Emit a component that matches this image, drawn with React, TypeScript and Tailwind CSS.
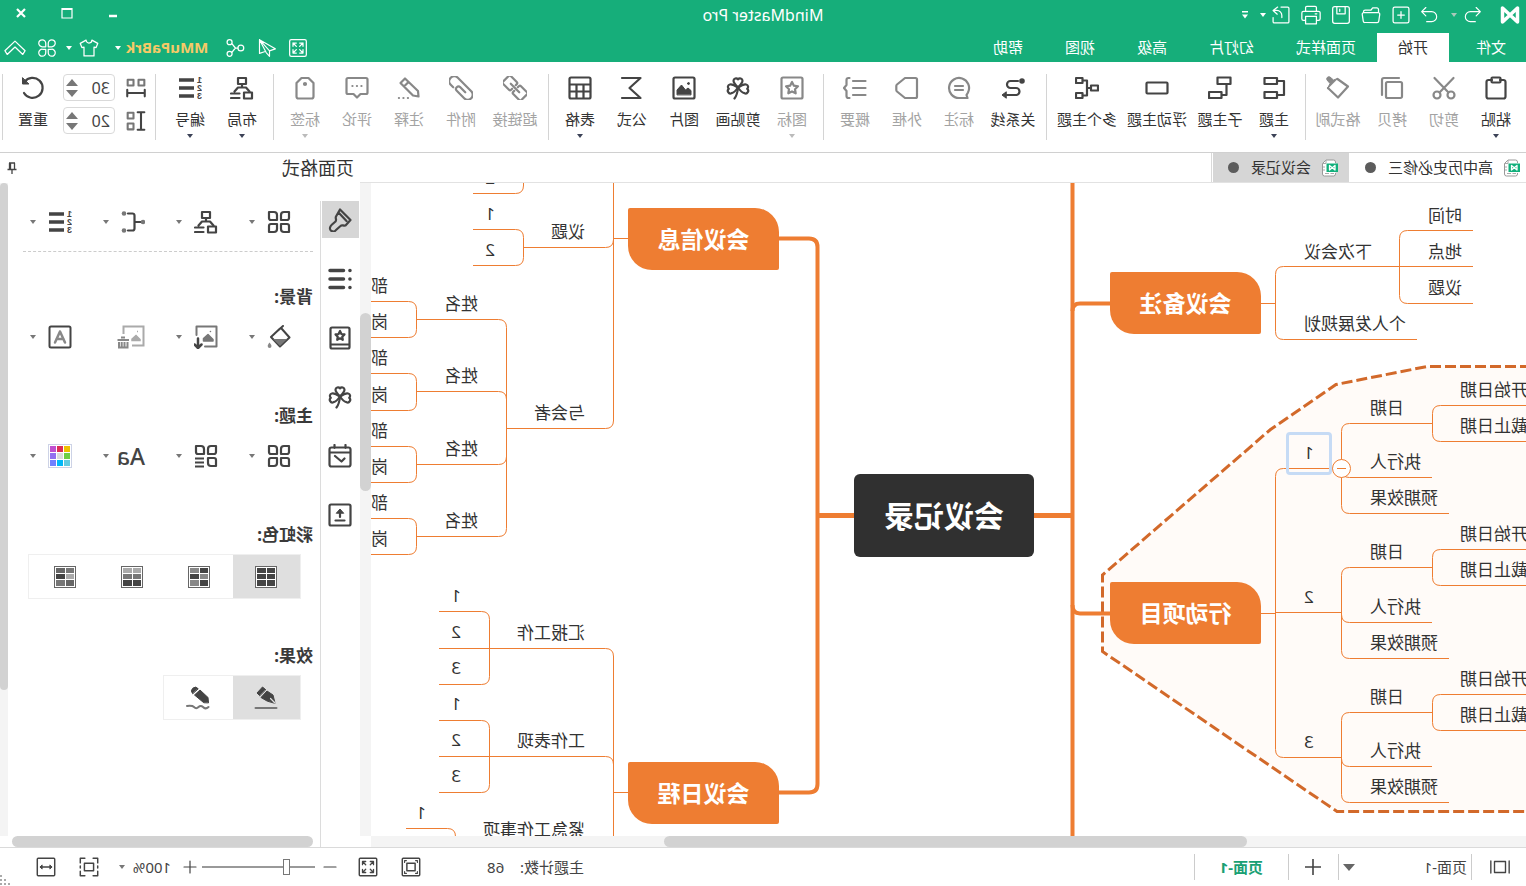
import type { ReactNode } from "react";

type IconProps = { children: ReactNode; size?: string; weight?: number; box?: number };

function Icon({ children, size = "size-6", weight = 2, box = 24 }: IconProps) {
  return (
    <svg
      className={`${size} shrink-0`}
      viewBox={`0 0 ${box} ${box}`}
      fill="none"
      stroke="currentColor"
      strokeWidth={weight}
      strokeLinecap="round"
      strokeLinejoin="round"
      aria-hidden="true"
    >
      {children}
    </svg>
  );
}

function Caret({ className = "text-[#777]" }: { className?: string }) {
  return (
    <svg className={`h-1 w-2 shrink-0 ${className}`} viewBox="0 0 8 4" fill="currentColor" aria-hidden="true">
      <path d="M1 0h6L4 4z" />
    </svg>
  );
}

const cloverShape = (
  <>
    <path d="M12 11.5C9 8.500 7.500 7 7.500 4.800A2.500 2.500 0 0 1 12 3.300a2.500 2.500 0 0 1 4.500 1.500C16.500 7 15 8.500 12 11.500z" />
    <path d="M12 11.500C9 9.500 6.500 7.700 3.800 8.500a2.500 2.500 0 0 0-1 4.300 2.600 2.600 0 0 0 2.700 4.400C8.200 16.700 10 14.500 12 11.500z" />
    <path d="M12 11.500c3-2 5.500-3.800 8.200-3a2.500 2.500 0 0 1 1 4.300 2.600 2.600 0 0 1-2.700 4.400C15.800 16.700 14 14.500 12 11.500z" />
    <path d="M12 12c.5 4.500 1.500 8 3.500 10.500" />
  </>
);

const layoutShape = (
  <>
    <path d="M8 2h8v6H8zM2 16.500h8v6H2z" />
    <path d="M12 8v3.500M4.500 15.500 8 11.500h8l3.500 4M14.500 17.500H23M14.500 22H23" />
  </>
);

const numberingShape = (
  <>
    <g fill="currentColor" stroke="none" fontSize="9" fontWeight="700" fontFamily="Liberation Sans, sans-serif">
      <text x="0" y="7">1</text>
      <text x="0" y="15">2</text>
      <text x="0" y="23">3</text>
    </g>
    <path d="M8 4h15M8 12h15M8 20h15" strokeWidth="3.500" strokeLinecap="butt" />
  </>
);

const themeGridShape = (
  <>
    <path d="M2 2h5a3 3 0 0 1 3 3v5H4a2 2 0 0 1-2-2z" />
    <path d="M22 2h-5a3 3 0 0 0-3 3v5h6a2 2 0 0 0 2-2z" />
    <path d="M2 22h5a3 3 0 0 0 3-3v-5H4a2 2 0 0 0-2 2z" />
  </>
);

const icons = {
  paste: (
    <>
      <path d="M8 4H4.500a2 2 0 0 0-2 2v14.500a2 2 0 0 0 2 2h15a2 2 0 0 0 2-2V6a2 2 0 0 0-2-2H16" />
      <rect x="7.500" y="1.500" width="9" height="5" rx="1" />
    </>
  ),
  cut: (
    <>
      <circle cx="5" cy="19" r="3.500" />
      <circle cx="19" cy="19" r="3.500" />
      <path d="M21.500 2 7.500 16.500M2.500 2l14 14.500" />
    </>
  ),
  copy: (
    <>
      <rect x="2" y="6" width="16" height="16" rx="1.500" />
      <path d="M5 2h15a2 2 0 0 1 2 2v15" />
    </>
  ),
  painter: (
    <>
      <path d="M12.500 3 2 10.500 12 21.500 22 12" />
      <path d="M12.500 2.500l4 1.500 3.500-3a2.200 2.200 0 0 1 3 3l-3 3.500 2.500 5z" fill="currentColor" strokeWidth="1" />
    </>
  ),
  topic: <path d="M9 2h12.500v6H9zM9 16h12.500v6H9zM9 5H2v14h7" />,
  subtopic: <path d="M1.500 1.500h13V8h-13zM10.500 16h12.500v6H10.500zM5.500 8v11h5" />,
  floating: <rect x="1.500" y="6.500" width="21" height="11" rx="1" />,
  multi: <path d="M1 9.500h7v5H1zM16.500 2h6.500v5h-6.500zM16.500 17h6.500v5h-6.500zM8 12h4M16.500 4.500H12v15h4.500" />,
  relation: (
    <>
      <circle cx="3" cy="5" r="1.700" fill="currentColor" />
      <path d="M7 5h7.500a3.500 3.500 0 0 1 0 7H9a3.500 3.500 0 0 0 0 7h9" />
      <path d="M19 16l4 3-4 3z" fill="currentColor" strokeWidth="1" />
    </>
  ),
  callout: <path d="M3.500 22H12A10 10 0 1 0 3 16.500L4.500 19zM8 10h8M8 14h8" />,
  boundary: <path d="M3.500 2H14L22 8.500a2 2 0 0 1 .700 1.500v4a2 2 0 0 1-.700 1.500L14 22H3.500A1.500 1.500 0 0 1 2 20.500v-17A1.500 1.500 0 0 1 3.500 2z" />,
  summary: <path d="M1.500 5H14M1.500 12H14M1.500 19H14M17.500 2h1a2 2 0 0 1 2 2v5l2.500 3-2.500 3v5a2 2 0 0 1-2 2h-1" />,
  mark: (
    <>
      <rect x="1.500" y="1.500" width="21" height="21" rx="1.500" />
      <path d="m12 6 1.900 3.700 4.100.600-3 2.900.700 4.100-3.700-1.900-3.700 1.900.700-4.100-3-2.900 4.100-.600z" />
    </>
  ),
  clover: cloverShape,
  picture: (
    <>
      <rect x="1.500" y="1.500" width="21" height="21" rx="1.500" />
      <circle cx="7.500" cy="7.500" r="1" fill="currentColor" strokeWidth="1" />
      <path d="M5 18.500v-4l3-2.500 2.500 2L14.500 9l4.500 5v4.500z" fill="currentColor" strokeWidth="1" />
    </>
  ),
  formula: <path d="M22 2H3.500l11 10L3.500 22H22" />,
  table: (
    <>
      <rect x="1.500" y="1.500" width="21" height="21" rx="1.500" />
      <path d="M2 8.500h20M2 15.500h20M8.500 9v13M15.500 9v13" />
    </>
  ),
  link: (
    <g transform="rotate(-45 12 12)">
      <path d="M10.500 9.500V8A1.500 1.500 0 0 0 9 6.500H.500A1.500 1.500 0 0 0-1 8v8a1.500 1.500 0 0 0 1.500 1.500H9a1.500 1.500 0 0 0 1.500-1.500v-1.500" />
      <path d="M13.500 9.500V8A1.500 1.500 0 0 1 15 6.500h8.500A1.500 1.500 0 0 1 25 8v8a1.500 1.500 0 0 1-1.500 1.500H15a1.500 1.500 0 0 1-1.500-1.500v-1.500" />
      <path d="M6 12h12" />
    </g>
  ),
  clip: (
    <g transform="rotate(-45 12 12)">
      <path d="M18 17h3.500a5 5 0 0 0 0-10H2.500a5 5 0 0 0 0 10H13a2.500 2.500 0 0 0 0-5H6" />
    </g>
  ),
  note: (
    <>
      <path d="M16 2.500 20.500 7 8 19.500l-5.500 1 .500-5.500zM12.500 6l4.500 4.500" />
      <path d="M13 22h.100M17.500 22h.100M22 22h.100" />
    </>
  ),
  comment: (
    <>
      <path d="M3 2h18a1.500 1.500 0 0 1 1.500 1.500v13A1.500 1.500 0 0 1 21 18h-5.500L12 21.500 8.500 18H3a1.500 1.500 0 0 1-1.500-1.500v-13A1.500 1.500 0 0 1 3 2z" />
      <path d="M7.500 10h.100M12 10h.100M16.500 10h.100" />
    </>
  ),
  tag: (
    <>
      <path d="M8.500 2h7l5 5v13.500a2 2 0 0 1-2 2h-13a2 2 0 0 1-2-2V7z" />
      <circle cx="12" cy="8" r="1" fill="currentColor" />
    </>
  ),
  layout: layoutShape,
  numbering: numberingShape,
  reset: (
    <>
      <path d="M20.500 6A10 10 0 1 0 21 17" />
      <path d="M22.500 2v6h-6z" fill="currentColor" strokeWidth="1" />
    </>
  ),
};

type Tool = { label: string; icon: keyof typeof icons; off?: boolean; menu?: boolean };

const groups: Tool[][] = [
  [
    { label: "粘贴", icon: "paste", menu: true },
    { label: "剪切", icon: "cut", off: true },
    { label: "拷贝", icon: "copy", off: true },
    { label: "格式刷", icon: "painter", off: true },
  ],
  [
    { label: "主题", icon: "topic", menu: true },
    { label: "子主题", icon: "subtopic" },
    { label: "浮动主题", icon: "floating" },
    { label: "多个主题", icon: "multi" },
  ],
  [
    { label: "关系线", icon: "relation" },
    { label: "标注", icon: "callout", off: true },
    { label: "外框", icon: "boundary", off: true },
    { label: "概要", icon: "summary", off: true },
  ],
  [
    { label: "图标", icon: "mark", off: true, menu: true },
    { label: "剪贴画", icon: "clover" },
    { label: "图片", icon: "picture" },
    { label: "公式", icon: "formula" },
    { label: "表格", icon: "table", menu: true },
  ],
  [
    { label: "超链接", icon: "link", off: true },
    { label: "附件", icon: "clip", off: true },
    { label: "注释", icon: "note", off: true },
    { label: "评论", icon: "comment", off: true },
    { label: "标签", icon: "tag", off: true, menu: true },
  ],
  [
    { label: "布局", icon: "layout", menu: true },
    { label: "编号", icon: "numbering", menu: true },
  ],
];

const toolWidths: Record<number, string> = { 2: "w-[52px]", 3: "w-14", 4: "w-[70px]" };

function ToolButton({ tool }: { tool: Tool }) {
  return (
    <button type="button" className={`flex shrink-0 flex-col items-center ${toolWidths[tool.label.length]}`}>
      <span className={tool.off ? "text-[#888]" : "text-[#444]"}>
        <Icon weight={2.2}>{icons[tool.icon]}</Icon>
      </span>
      <span className={`mt-[7px] text-[15px] leading-6 whitespace-nowrap ${tool.off ? "text-[#a3a3a3]" : "text-[#333]"}`}>
        {tool.label}
      </span>
      {tool.menu && <Caret className={tool.off ? "mt-[3px] text-[#bbb]" : "mt-[3px] text-[#3c4257]"} />}
    </button>
  );
}

function Spinner({ label, value, children }: { label: string; value: string; children: ReactNode }) {
  return (
    <div className="flex items-center gap-[11px]">
      <span className="text-[#444]">
        <Icon size="size-5" weight={2}>{children}</Icon>
      </span>
      <div className="flex h-[27px] w-[52px] items-center rounded border border-[#d9d9d9]">
        <input
          type="text"
          aria-label={label}
          defaultValue={value}
          className="w-9 min-w-0 pl-1 text-[16px] leading-6 text-[#444] outline-none"
        />
        <span className="flex flex-col gap-1 text-[#777]">
          <button type="button" aria-label={`${label}增加`}>
            <svg className="h-[7px] w-3" viewBox="0 0 12 7" fill="currentColor"><path d="M6 0l6 7H0z" /></svg>
          </button>
          <button type="button" aria-label={`${label}减少`}>
            <svg className="h-[7px] w-3" viewBox="0 0 12 7" fill="currentColor"><path d="M0 0h12L6 7z" /></svg>
          </button>
        </span>
      </div>
    </div>
  );
}

function IconButton({ label, children, className = "" }: { label: string; children: ReactNode; className?: string }) {
  return (
    <button type="button" aria-label={label} className={`flex shrink-0 items-center justify-center ${className}`}>
      {children}
    </button>
  );
}

function Header() {
  return (
    <header className="bg-[#16ae7a] text-white">
      <div className="grid h-[33px] grid-cols-[1fr_auto_1fr] items-center pb-[3px]">
        <div className="flex items-center pl-1.5">
          <Icon size="size-5" weight={3.5} box={20}>
            <path d="M2.500 3v14L17.500 3v14z" />
          </Icon>
          <IconButton label="撤销" className="ml-[18px]">
            <Icon size="size-5" weight={1.4}><path d="M7 3 2 8l5 5M2 8h12a6 6 0 0 1 0 12H8" /></Icon>
          </IconButton>
          <IconButton label="撤销列表" className="ml-1"><Caret className="text-[#a9c9ba]" /></IconButton>
          <IconButton label="恢复" className="ml-2.5">
            <Icon size="size-5" weight={1.4}><path d="m17 3 5 5-5 5M22 8H10a6 6 0 0 0 0 12h6" /></Icon>
          </IconButton>
          <div className="ml-[9px] flex gap-2.5">
            <IconButton label="新建">
              <Icon size="size-5" weight={1.5}><rect x="2.500" y="2.500" width="19" height="19" rx="2" /><path d="M12 8v8M8 12h8" /></Icon>
            </IconButton>
            <IconButton label="打开">
              <Icon size="size-5" weight={1.5}><path d="M3 9V5.500a2 2 0 0 1 2-2h5l2 2.500h7a2 2 0 0 1 2 2v1M3.500 9h17a2 2 0 0 1 2 2.300l-1.200 8a2 2 0 0 1-2 1.700H4.700a2 2 0 0 1-2-1.700l-1.200-8a2 2 0 0 1 2-2.300z" /></Icon>
            </IconButton>
            <IconButton label="保存">
              <Icon size="size-5" weight={1.5}><rect x="2" y="2" width="20" height="20" rx="2.500" /><path d="M7 2v8.500h10V2M13.500 5v2.500" /></Icon>
            </IconButton>
            <IconButton label="打印">
              <Icon size="size-5" weight={1.5}><path d="M5.500 7.500V3a1.500 1.500 0 0 1 1.500-1.500h10A1.500 1.500 0 0 1 18.500 3v4.500M5.500 18.500H3a2 2 0 0 1-2-2v-7a2 2 0 0 1 2-2h18a2 2 0 0 1 2 2v7a2 2 0 0 1-2 2h-2.500M5.500 13.500h13V22.500h-13zM5 10.500h2" /></Icon>
            </IconButton>
            <IconButton label="导出">
              <Icon size="size-5" weight={1.5}><path d="M12 2.500H4a1.500 1.500 0 0 0-1.500 1.500v16A1.500 1.500 0 0 0 4 21.500h16a1.500 1.500 0 0 0 1.500-1.500v-5M16 2.500l5.500 4-5 4.500M21 6.500h-4a6 6 0 0 0-6 6V15" /></Icon>
            </IconButton>
          </div>
          <IconButton label="导出选项" className="ml-1"><Caret className="text-white" /></IconButton>
          <IconButton label="自定义工具栏" className="ml-2.5">
            <svg className="size-2" viewBox="0 0 8 8" fill="currentColor"><path d="M1 0h6v1.500H1zM1 3.500h6L4 7.500z" /></svg>
          </IconButton>
        </div>
        <h1 className="text-[16px] leading-6 font-normal">MindMaster Pro</h1>
        <div className="flex items-center justify-end gap-[30px] pr-[13px] pb-1">
          <IconButton label="最小化">
            <Icon size="size-4" weight={2.5} box={16}><path d="M4 11h8" strokeLinecap="butt" /></Icon>
          </IconButton>
          <IconButton label="最大化">
            <Icon size="size-4" weight={1.2} box={16}><path d="M3 3.500h10v9.500H3zM3 4.500h10" strokeLinejoin="miter" /></Icon>
          </IconButton>
          <IconButton label="关闭">
            <Icon size="size-4" weight={2.2} box={16}><path d="m4 4 8 8M12 4l-8 8" strokeLinecap="butt" /></Icon>
          </IconButton>
        </div>
      </div>
      <div className="flex h-[29px] items-stretch justify-between">
        <nav className="flex text-[15px] whitespace-nowrap">
          <button type="button" className="mr-[7px] px-5">文件</button>
          <button type="button" className="bg-white px-[21px] text-[#333]">开始</button>
          {["页面样式", "幻灯片", "高级", "视图", "帮助"].map((name) => (
            <button key={name} type="button" className="px-[21px]">{name}</button>
          ))}
        </nav>
        <div className="flex items-center pr-1">
          <IconButton label="全屏">
            <Icon size="size-5" weight={1.5}><rect x="2" y="2" width="20" height="20" rx="2" /><path d="M6 10V6h4M6 6l4 4M18 10V6h-4M18 6l-4 4M6 14v4h4M6 18l4-4M18 14v4h-4M18 18l-4-4" /></Icon>
          </IconButton>
          <IconButton label="发送" className="ml-[11px]">
            <Icon size="size-5" weight={1.4}><path d="M21 2 2 13l7 2.500L21 2v16.500l-6-2M9 15.500V22l4-4.500L21 2" /></Icon>
          </IconButton>
          <IconButton label="分享" className="ml-3">
            <Icon size="size-5" weight={1.5}><circle cx="5" cy="12" r="3.500" /><circle cx="18.500" cy="5" r="3" /><circle cx="18.500" cy="19" r="3" /><path d="M8.500 12h3l4-5M11.500 12l4 5" /></Icon>
          </IconButton>
          <button type="button" className="ml-[17px] flex items-center gap-1 text-[15px] font-bold text-[#f6ca67]">
            MMuPaBrk
            <Caret className="text-white" />
          </button>
          <IconButton label="皮肤" className="ml-[15px]">
            <Icon size="size-5" weight={1.5}><path d="M8.500 2.500 1.500 6.500 3.500 11.500 6 11v10.500h12V11l2.500.500 2-5-7-4a3.500 3.500 0 0 1-7 0z" /></Icon>
          </IconButton>
          <IconButton label="皮肤选项" className="ml-1.5"><Caret className="text-white" /></IconButton>
          <IconButton label="应用" className="ml-2">
            <Icon size="size-5" weight={1.5}><path d="M10.500 10.500H6.500A4.200 4.200 0 1 1 10.500 6.500zM13.500 10.500V6.500a4.200 4.200 0 1 1 4 4zM10.500 13.500v4a4.200 4.200 0 1 1-4-4zM13.500 13.500h4a4.200 4.200 0 1 1-4 4z" /></Icon>
          </IconButton>
          <IconButton label="收起功能区" className="ml-[11px]">
            <Icon size="size-[22px]" weight={1.4}><path d="M1 15 12 4.500 23 15l-2.500 4L12 11l-8.500 8z" /></Icon>
          </IconButton>
        </div>
      </div>
    </header>
  );
}

function Divider() {
  return <span className="h-[66px] w-px shrink-0 bg-[#d4d4d4]" />;
}

function Ribbon() {
  return (
    <div className="flex h-[91px] items-start border-b border-[#d0d0d0] bg-white pt-3">
      {groups.map((group, i) => (
        <div key={group[0].label} className="flex shrink-0">
          <div className={`flex pt-0.5 ${i === 0 ? "pr-1 pl-1" : "px-[5px]"}`}>
            {group.map((tool) => (
              <ToolButton key={tool.label} tool={tool} />
            ))}
          </div>
          {i < groups.length - 1 && <Divider />}
        </div>
      ))}
      <div className="ml-auto flex">
        <Divider />
        <div className="flex flex-col gap-1.5 pl-[9px]">
          <Spinner label="水平间距" value="30">
            <g className="text-[#777]" stroke="currentColor"><path d="M2 2h7v7H2zM15 2h7v7h-7z" strokeWidth="2.500" /></g>
            <path d="M1.500 14v8M22.500 14v8M2 18h20" strokeWidth="2.500" />
          </Spinner>
          <Spinner label="垂直间距" value="20">
            <g className="text-[#777]" stroke="currentColor"><path d="M15 2h7v7h-7zM15 15h7v7h-7z" strokeWidth="2.500" /></g>
            <path d="M2 1.500h8M2 22.500h8M6 2v20" strokeWidth="2.500" />
          </Spinner>
        </div>
        <div className="flex px-1 pt-0.5">
          <ToolButton tool={{ label: "重置", icon: "reset" }} />
        </div>
        <Divider />
      </div>
      <span className="w-0.5" />
    </div>
  );
}

function DocIcon() {
  return (
    <svg className="size-[18px] shrink-0" viewBox="0 0 18 18" aria-hidden="true">
      <path d="M3.500 4V3a2 2 0 0 1 2-2H13l3.500 3.500V15a2 2 0 0 1-2 2h-9a2 2 0 0 1-2-2v-1" fill="#fff" stroke="#999" />
      <path d="M13 1v3.500h3.500M5 14.500h3.500M10 14.500h4M14 8h2M14 11h2" fill="none" stroke="#aaa" />
      <path d="M1 4.500h11.500v8.500H1z" fill="#12b07c" />
      <path d="M4 6.500v4.500l5.500-4.500v4.500z" fill="none" stroke="#fff" strokeWidth="1.300" strokeLinejoin="round" />
    </svg>
  );
}

function DocTab({ name, active }: { name: string; active?: boolean }) {
  return (
    <button
      type="button"
      className={`flex items-center gap-2.5 whitespace-nowrap text-[15px] text-[#333] ${active ? "bg-[#d6d6d6] pr-[15px] pl-2.5" : "pr-4 pl-[5px]"}`}
    >
      <DocIcon />
      {name}
      <span className="ml-0.5 size-[11px] rounded-full bg-[#5c5c5c]" />
    </button>
  );
}

/* Rounded elbow from the vertical stem at `stem` to a horizontal line at `y`.
   `from` tells whether the stem arrives from above (-1) or from below (1). */
function elbow(stem: number, end: number, y: number, from: -1 | 1) {
  const turn = end < stem ? -8 : 8;
  return `M${stem} ${y + 8 * from}Q${stem} ${y} ${stem + turn} ${y}H${end}`;
}

function bracket(stem: number, end: number, top: number, bottom: number) {
  return elbow(stem, end, top, 1) + elbow(stem, end, bottom, -1) + `M${stem} ${top + 8}V${bottom - 8}`;
}

const actions = [
  { line: 285.5, date: 240.5, who: 294.5, result: 330.5, start: 222.5, due: 258.5 },
  { line: 429.5, date: 384.5, who: 439.5, result: 475.5, start: 366.5, due: 402.5 },
  { line: 574.5, date: 529.5, who: 583.5, result: 619.5, start: 511.5, due: 547.5 },
];

const people = [
  { line: 136.5, dept: 118.5, post: 154.5 },
  { line: 208.5, dept: 190.5, post: 227.5 },
  { line: 281.5, dept: 263.5, post: 299.5 },
  { line: 353.5, dept: 335.5, post: 371.5 },
];

const thinLines = [
  "M250.500 120.500H266",
  bracket(250.5, 126.5, 83.5, 156.5),
  "M127 156.500H109",
  bracket(126.5, 53, 47.5, 120.5),
  "M127 83.500H53",
  "M250.500 430.500H266",
  bracket(250.5, 184.5, 285.5, 574.5),
  "M250.500 429.500H184.500",
  ...actions.map(
    (a) =>
      bracket(184.5, 94, a.date, a.result) +
      `M95 ${a.result}H77` +
      elbow(184.5, 94, a.who, -1) +
      bracket(93.5, -10, a.start, a.due),
  ),
  "M898 55.500H912.500V0M912.500 55V238",
  elbow(912.5, 1002.5, 64.5, -1),
  elbow(912.5, 1019.5, 245.5, -1),
  "M1002.500 0V3" + elbow(1002.5, 1053, 10.5, -1),
  bracket(1002.5, 1053, 46.5, 82.5),
  bracket(1019.5, 1109.5, 136.5, 353.5),
  elbow(1019.5, 1109.5, 208.5, 1),
  elbow(1019.5, 1109.5, 281.5, -1),
  ...people.map((p) => bracket(1109.5, 1200, p.dept, p.post)),
  "M898 609.500H912.500M912.500 473V700",
  elbow(912.5, 1087, 465.5, 1),
  elbow(912.5, 1087, 573.5, 1),
  bracket(1036.5, 1087, 428.5, 501.5),
  bracket(1036.5, 1087, 537.5, 609.5),
  elbow(1070.5, 1120, 645.5, 1),
].join("");

/* Labels stand on their branch line; `edge` is the side facing the centre. */
type Label = { text: string; edge: number; line: number; side: "left" | "right" };

const leftLabel = (text: string, edge: number, line: number): Label => ({ text, edge, line, side: "left" });
const rightLabel = (text: string, edge: number, line: number): Label => ({ text, edge, line, side: "right" });

const labels: Label[] = [
  leftLabel("下次会议", 222, 84),
  leftLabel("个人发展规划", 222, 156),
  leftLabel("时间", 98, 48),
  leftLabel("地点", 98, 84),
  leftLabel("议题", 98, 120),
  ...actions.flatMap((a, i) => [
    leftLabel(String(i + 1), 222, Math.floor(a.line)),
    leftLabel("日期", 156, Math.floor(a.date)),
    leftLabel("执行人", 156, Math.floor(a.who)),
    leftLabel("预期效果", 156, Math.floor(a.result)),
    leftLabel("开始日期", 66, Math.floor(a.start)),
    leftLabel("截止日期", 66, Math.floor(a.due)),
  ]),
  rightLabel("2", 1031, 10),
  rightLabel("议题", 941, 64),
  rightLabel("1", 1031, 46),
  rightLabel("2", 1031, 82),
  rightLabel("与会者", 941, 245),
  ...people.flatMap((p) => [
    rightLabel("姓名", 1048, Math.floor(p.line)),
    rightLabel("部门", 1138, Math.floor(p.dept)),
    rightLabel("岗位", 1138, Math.floor(p.post)),
  ]),
  rightLabel("汇报工作", 941, 465),
  rightLabel("工作表现", 941, 573),
  rightLabel("紧急工作事项", 941, 662),
  ...[428, 536].flatMap((top) => [0, 1, 2].map((n) => rightLabel(String(n + 1), 1065, top + n * 36))),
  rightLabel("1", 1100, 645),
];

const branches = [
  { text: "会议备注", place: "left-[265px] top-[89px]" },
  { text: "行动项目", place: "left-[265px] top-[399px]" },
  { text: "会议信息", place: "left-[747px] top-[25px]" },
  { text: "会议日程", place: "left-[747px] top-[579px]" },
];

function MindMap() {
  return (
    <div className="relative min-w-0 flex-1 overflow-hidden bg-white">
      <svg className="absolute top-0 left-0 h-[700px] w-[1200px]" viewBox="0 0 1200 700" fill="none" aria-hidden="true">
        <path
          d="M-20 183.500H99L190 201.500 255.500 246.500 423.500 392V468.500L189 628.500H-20z"
          fill="#fffbf8"
          stroke="#d2692a"
          strokeWidth="3"
          strokeDasharray="11 4"
        />
        <g stroke="#ee7d32">
          <path d={thinLines} />
          <path d="M453.500 0V700" strokeWidth="4" />
          <path d="M416 120.500H446Q453.500 120.500 453.500 128M453.500 422Q453.500 430.500 446 430.500H416" strokeWidth="4" />
          <path d="M747 55.500H717Q708.500 55.500 708.500 64V601Q708.500 609.500 717 609.500H747" strokeWidth="4" />
          <path d="M452 332.500H492M671 332.500H708" strokeWidth="5" />
        </g>
      </svg>
      {labels.map((l) => (
        <span
          key={`${l.text}-${l.edge}-${l.line}`}
          className={`absolute text-[17px] leading-6 whitespace-nowrap text-[#333] ${l.side === "left" ? "-translate-x-full" : ""}`}
          style={{ left: l.edge, top: l.line - 27 }}
        >
          {l.text}
        </span>
      ))}
      {branches.map((b) => (
        <div
          key={b.text}
          className={`absolute flex h-[62px] w-[151px] items-center justify-center rounded-[2px] rounded-tl-3xl rounded-br-3xl bg-[#ee7d32] text-[23px] font-bold whitespace-nowrap text-white ${b.place}`}
        >
          {b.text}
        </div>
      ))}
      <div className="absolute top-[291px] left-[492px] flex h-[83px] w-[180px] items-center justify-center rounded-md bg-[#303030] text-[30px] font-bold whitespace-nowrap text-white">
        会议记录
      </div>
      <div className="absolute top-[249px] left-[194px] h-[43px] w-[46px] rounded border-3 border-[#c6dbf5]" />
      <button type="button" aria-label="折叠" className="absolute top-[276px] left-[175px]">
        <svg className="size-[19px]" viewBox="0 0 19 19">
          <circle cx="9.500" cy="9.500" r="9" fill="#fff" stroke="#ee7d32" />
          <path d="M5 9.500h9" stroke="#ee7d32" />
        </svg>
      </button>
    </div>
  );
}

function Workspace() {
  return (
    <main className="flex min-w-0 flex-1 flex-col">
      <div className="flex h-[30px] shrink-0 border-b border-[#e2e2e2] bg-white">
        <DocTab name="高中历史必修三" />
        <DocTab name="会议记录" active />
        <span className="ml-px w-px bg-[#d9d9d9]" />
      </div>
      <div className="flex min-h-0 flex-1">
        <MindMap />
        <div className="w-[11px] shrink-0 bg-[#f4f4f4] pt-[130px]">
          <div className="h-[178px] rounded-full bg-[#d2d2d2]" />
        </div>
      </div>
      <div className="mr-[11px] h-[11px] shrink-0 bg-[#f4f4f4] pl-[279px]">
        <div className="h-full w-[583px] rounded-full bg-[#d2d2d2]" />
      </div>
    </main>
  );
}

const railTools: { label: string; shape: ReactNode }[] = [
  {
    label: "页面格式",
    shape: (
      <path d="M12 1.500 1.500 12l5 5.500c2.500.500 3.500-1 5 .500l4.500 4a3 3 0 0 0 5.500-3.500 3 3 0 0 0-1-1.500l-4-3.500c-1.500-2 .500-3-.500-5zM13.500 4.500 5.500 13" />
    ),
  },
  {
    label: "大纲",
    shape: <path d="M2 3.500h.100M2 12h.100M2 20.500h.100M8.500 3.500h13.500M8.500 12h13.500M8.500 20.500h13.500" strokeWidth="3.500" />,
  },
  {
    label: "图标库",
    shape: (
      <>
        <rect x="2.500" y="1.500" width="19" height="21" rx="1.500" />
        <path d="M3 18.500h18M12 5l1.400 3 3.100.400-2.200 2.200.500 3.200-2.800-1.500-2.800 1.500.500-3.200L7.500 8.400l3.100-.400z" />
      </>
    ),
  },
  { label: "剪贴画", shape: cloverShape },
  {
    label: "任务",
    shape: <path d="M3.500 3.500h17a2 2 0 0 1 2 2v15a2 2 0 0 1-2 2h-17a2 2 0 0 1-2-2v-15a2 2 0 0 1 2-2zM2 8.500h20M6.500 1v3M17.500 1v3M7.500 14.500l3 3L17 12" />,
  },
  {
    label: "附件面板",
    shape: (
      <>
        <rect x="1.500" y="1.500" width="21" height="21" rx="1.500" />
        <path d="M12 14V8M7.500 17.500h9" />
        <path d="m8.500 10 3.500-4 3.500 4z" fill="currentColor" strokeWidth="1" />
      </>
    ),
  },
];

function Cell({ label, menu = true, children }: { label: string; menu?: boolean; children: ReactNode }) {
  return (
    <button type="button" aria-label={label} className="flex h-6 w-[73px] shrink-0 items-center gap-[11px] text-[#444]">
      {children}
      {menu && <Caret />}
    </button>
  );
}

function SectionTitle({ children, className }: { children: ReactNode; className: string }) {
  return <h2 className={`text-[17px] leading-6 font-bold text-[#3a3a3a] ${className}`}>{children}</h2>;
}

const palette = ["#efc000", "#dc2e55", "#c04fce", "#6fcf45", "#dcdcdc", "#9370f0", "#62cbe0", "#00b8f8", "#6f80ff"];

const rainbow = [
  { name: "单色", cells: ["#444", "#444", "#444", "#444", "#444", "#444"] },
  { name: "交替", cells: ["#444", "#888", "#888", "#444", "#444", "#888"] },
  { name: "渐变", cells: ["#aaa", "#aaa", "#777", "#777", "#444", "#444"] },
  { name: "多彩", cells: ["#777", "#666", "#aaa", "#444", "#666", "#777"] },
];

function FormatPanel() {
  return (
    <aside className="flex w-[360px] shrink-0 flex-col bg-white">
      <div className="flex h-[30px] shrink-0 items-center justify-between pr-1.5 pl-1.5">
        <h2 className="text-[18px] leading-6 text-[#333]">页面格式</h2>
        <IconButton label="固定" className="text-[#444]">
          <Icon size="size-3" weight={1.3} box={12}><path d="M3.500 1v6.500M8.500 1v6.500M3 1h6M1.500 7.500h9M6 7.500V12M7.500 1v6" strokeLinecap="butt" /></Icon>
        </IconButton>
      </div>
      <div className="flex min-h-0 flex-1">
        <div className="mt-[18px] flex w-10 shrink-0 flex-col gap-[22px] border-r border-[#dcdcdc] pl-px">
          {railTools.map((tool, i) => (
            <IconButton
              key={tool.label}
              label={tool.label}
              className={`size-[37px] text-[#444] ${i === 0 ? "bg-[#d6d6d6]" : ""}`}
            >
              <Icon weight={2.2}>{tool.shape}</Icon>
            </IconButton>
          ))}
        </div>
        <div className="flex min-w-0 flex-1 flex-col">
          <div className="flex min-h-0 flex-1">
            <div className="min-w-0 flex-1 overflow-hidden pl-[7px]">
              <div className="flex pt-[27px] pl-[22px]">
                <Cell label="主题样式"><Icon weight={2.2}>{themeGridShape}<path d="M22 22h-5a3 3 0 0 1-3-3v-5h6a2 2 0 0 1 2 2z" /></Icon></Cell>
                <Cell label="布局样式"><Icon weight={2.2}>{layoutShape}</Icon></Cell>
                <Cell label="连接线样式">
                  <Icon weight={2.2}>
                    <path d="M4 12h6M17 3.500h-4.500a2 2 0 0 0-2 2v13a2 2 0 0 0 2 2H17" />
                    <g className="text-[#777]" fill="currentColor" stroke="none"><circle cx="2" cy="12" r="2.300" /><circle cx="21" cy="3.500" r="2.300" /><circle cx="21" cy="20.500" r="2.300" /></g>
                  </Icon>
                </Cell>
                <Cell label="编号样式"><Icon>{numberingShape}</Icon></Cell>
              </div>
              <div className="mt-[17px] mr-[15px] border-t border-dashed border-[#ccc]" />
              <SectionTitle className="mt-[33px]">背景:</SectionTitle>
              <div className="mt-4 flex pl-[22px]">
                <Cell label="背景颜色">
                  <Icon>
                    <path d="m9.500 3.500-8 9 9.500 9 9-9.500-9-8.500M8 1l5 4.500" />
                    <path d="M4 14h14l-7 7z" fill="#777" stroke="none" />
                    <path d="M21.500 17.500c1.500 2 1.800 2.700 1.800 3.500a1.900 1.900 0 0 1-3.800 0c0-.800.500-1.500 2-3.500z" fill="#888" stroke="none" />
                  </Icon>
                </Cell>
                <Cell label="背景图片">
                  <Icon>
                    <g className="text-[#777]" stroke="currentColor">
                      <path d="M13 21.500H1.500v-20h20V10" />
                      <path d="M5 16v-1.500l5-5 4.500 4V16zM7.500 6.500h.100" fill="currentColor" strokeWidth="1.500" />
                    </g>
                    <path d="M20 13.500V23M16.500 19.500 20 23l3.500-3.500" strokeWidth="2.500" />
                  </Icon>
                </Cell>
                <Cell label="删除背景图片" menu={false}>
                  <svg className="h-6 w-7 shrink-0 text-[#aaa]" viewBox="0 0 28 24" fill="none" stroke="currentColor" strokeWidth="2">
                    <path d="M13 20.500H1.500v-19h20V9" />
                    <path d="M5 15.500v-1l4-4 4 3.500v1.500zM7 6.500h1" fill="currentColor" strokeWidth="1.500" />
                    <path d="M16 15h11.500M20 12.500h4M17.500 17v5.500h8.500V17M20.500 17v5M23.300 17v5" stroke="#888" />
                  </svg>
                </Cell>
                <Cell label="水印">
                  <Icon><rect x="1.500" y="1.500" width="21" height="21" rx="1.500" /><path d="m7 17.500 5-11 5 11M8.500 14h7" stroke="#888" strokeWidth="2.500" /></Icon>
                </Cell>
              </div>
              <SectionTitle className="mt-[55px]">主题:</SectionTitle>
              <div className="mt-4 flex pl-[22px]">
                <Cell label="主题"><Icon weight={2.2}>{themeGridShape}<path d="M22 22h-5a3 3 0 0 1-3-3v-5h6a2 2 0 0 1 2 2z" /></Icon></Cell>
                <Cell label="主题列表"><Icon weight={2.2}>{themeGridShape}<path d="M14 14.500h9M14 18.500h9M14 22.500h9" strokeLinecap="butt" /></Icon></Cell>
                <button type="button" aria-label="主题字体" className="flex h-6 w-[73px] shrink-0 items-center gap-2 text-[#444]">
                  <span className="w-[27px] font-['Noto_Sans'] text-[23px] leading-6 font-medium">Aa</span>
                  <Caret />
                </button>
                <Cell label="主题颜色">
                  <span className="grid size-6 shrink-0 grid-cols-3 gap-px border border-[#cdd3e6] p-px">
                    {palette.map((color) => (
                      <span key={color} style={{ backgroundColor: color }} />
                    ))}
                  </span>
                </Cell>
              </div>
              <SectionTitle className="mt-[55px]">彩虹色:</SectionTitle>
              <div className="mt-[7px] ml-3 flex h-[45px] w-fit border border-[#efefef] pr-[3px]">
                {rainbow.map((r, i) => (
                  <button
                    key={r.name}
                    type="button"
                    aria-label={r.name}
                    className={`flex w-[67px] items-center justify-center ${i === 0 ? "bg-[#dfdfdf]" : ""}`}
                  >
                    <span className="grid size-[22px] grid-cols-2 gap-px border border-[#666] bg-white p-px">
                      {r.cells.map((color, n) => (
                        <span key={n} style={{ backgroundColor: color }} />
                      ))}
                    </span>
                  </button>
                ))}
              </div>
              <SectionTitle className="mt-[45px]">效果:</SectionTitle>
              <div className="mt-[7px] ml-3 flex h-[45px] w-fit border border-[#efefef] text-[#444]">
                <IconButton label="标准" className="w-[67px] bg-[#dfdfdf]">
                  <Icon>
                    <path d="m3 17 2-8 6-4 6 6.500L11 15z" fill="currentColor" strokeWidth="1" />
                    <path d="m12.500 3.500 3-2.500 5.500 6-2.500 2.500z" fill="currentColor" strokeWidth="1" />
                    <path d="m3 17 4.500-4.500" stroke="#dfdfdf" strokeWidth="1.200" />
                    <path d="M1.500 22h21" stroke="#777" />
                  </Icon>
                </IconButton>
                <IconButton label="手绘" className="w-[69px]">
                  <Icon>
                    <path d="m1.500 16.500.500-5L10 4l5.500 5L6.500 16.500z" fill="currentColor" strokeWidth="1" />
                    <path d="M12 2.500a3.300 3.300 0 0 1 5.500 5z" fill="currentColor" strokeWidth="1" />
                    <path d="M1.500 21c2.500 2.500 4 1.500 5.500 0s3-1.500 4.500 0 3 1.500 4.500 0 3-1.500 7-1" stroke="#777" />
                  </Icon>
                </IconButton>
              </div>
            </div>
            <div className="w-2 shrink-0 bg-[#f4f4f4]">
              <div className="h-[507px] rounded-full bg-[#d2d2d2]" />
            </div>
          </div>
          <div className="h-[11px] shrink-0 pr-3 pl-[7px]">
            <div className="h-full rounded-full bg-[#d2d2d2]" />
          </div>
        </div>
      </div>
    </aside>
  );
}

function StatusBar() {
  return (
    <footer className="flex h-[39px] shrink-0 items-center border-t border-[#dadada] bg-white text-[15px] whitespace-nowrap text-[#444]">
      <IconButton label="页面列表" className="ml-[15px]">
        <Icon size="size-[22px]" weight={1.5}><path d="M2 5.500v13M22 5.500v13M6 6h12v12H6z" /></Icon>
      </IconButton>
      <div className="relative ml-[17px] flex h-[26px] w-[134px] items-center border-x border-[#ccc]">
        <select aria-label="当前页面" className="h-full w-full appearance-none bg-transparent pl-1 outline-none">
          <option>页面-1</option>
        </select>
        <svg className="pointer-events-none absolute top-2.5 right-1 h-[7px] w-3" viewBox="0 0 12 7" fill="#666"><path d="M0 0h12L6 7z" /></svg>
      </div>
      <IconButton label="添加页面" className="h-[26px] w-[50px] border-r border-[#ccc]">
        <Icon size="size-5" weight={1.6} box={20}><path d="M10 2v16M2 10h16" strokeLinecap="butt" /></Icon>
      </IconButton>
      <button type="button" className="h-[26px] border-r border-[#ccc] px-[25px] font-bold text-[#1aa073]">页面-1</button>
      <span className="ml-auto flex w-[97px] justify-between">
        <span>主题计数:</span>
        <span>68</span>
      </span>
      <IconButton label="适合窗口" className="ml-[65px]">
        <Icon size="size-[22px]" weight={1.6}><rect x="2.500" y="2.500" width="19" height="19" rx="1" /><rect x="7.500" y="8" width="9" height="8" /><path d="M5 7V5h2M17 5h2v2M5 17v2h2M17 19h2v-2" strokeWidth="1.200" /></Icon>
      </IconButton>
      <IconButton label="全屏显示" className="ml-[21px]">
        <Icon size="size-[22px]" weight={1.6}><rect x="2.500" y="2.500" width="19" height="19" rx="1" /><path d="M6 9.500V6h3.500M6 6l3.500 3.500M18 9.500V6h-3.500M18 6l-3.500 3.500M6 14.500V18h3.500M6 18l3.500-3.500M18 14.500V18h-3.500M18 18l-3.500-3.500" strokeWidth="1.400" /></Icon>
      </IconButton>
      <IconButton label="缩小" className="ml-5">
        <Icon size="size-3.5" weight={1.2} box={14}><path d="M1 7h12" /></Icon>
      </IconButton>
      <input
        type="range"
        aria-label="缩放比例"
        defaultValue={24}
        className="ml-2 h-4 w-[113px] appearance-none bg-[linear-gradient(#999,#999)] bg-[length:100%_2px] bg-center bg-no-repeat [&::-webkit-slider-thumb]:h-4 [&::-webkit-slider-thumb]:w-[7px] [&::-webkit-slider-thumb]:appearance-none [&::-webkit-slider-thumb]:border [&::-webkit-slider-thumb]:border-[#777] [&::-webkit-slider-thumb]:bg-white"
      />
      <IconButton label="放大" className="ml-[5px]">
        <Icon size="size-3.5" weight={1.2} box={14}><path d="M1 7h12M7 1v12" /></Icon>
      </IconButton>
      <button type="button" className="ml-[11px] flex items-center gap-1.5">
        <span className="w-10">100%</span>
        <Caret />
      </button>
      <IconButton label="居中显示" className="ml-[18px]">
        <Icon size="size-[22px]" weight={1.6}><path d="M2.500 7.500v-5h5M16.500 2.500h5v5M21.500 16.500v5h-5M7.500 21.500h-5v-5M7 8h10v8H7zM2.500 11v2M21.500 11v2" /></Icon>
      </IconButton>
      <IconButton label="适合宽度" className="ml-[21px]">
        <Icon size="size-[22px]" weight={1.6}><rect x="2.500" y="2.500" width="19" height="19" rx="1" /><path d="M6 12h12" /><path d="m7.500 10-2 2 2 2zM16.500 10l2 2-2 2z" fill="currentColor" strokeWidth="1" /></Icon>
      </IconButton>
      <svg className="ml-6 size-[11px] self-end" viewBox="0 0 11 11" fill="#aaa" aria-hidden="true">
        <path d="M9 0h2v2H9zM5 4h2v2H5zM9 4h2v2H9zM1 8h2v2H1zM5 8h2v2H5zM9 8h2v2H9z" />
      </svg>
    </footer>
  );
}

export default function App() {
  return (
    <div className="flex h-screen -scale-x-100 flex-col overflow-hidden bg-white font-['Noto_Sans','Noto_Sans_CJK_SC',sans-serif]">
      <Header />
      <Ribbon />
      <div className="flex min-h-0 flex-1">
        <Workspace />
        <FormatPanel />
      </div>
      <StatusBar />
    </div>
  );
}
